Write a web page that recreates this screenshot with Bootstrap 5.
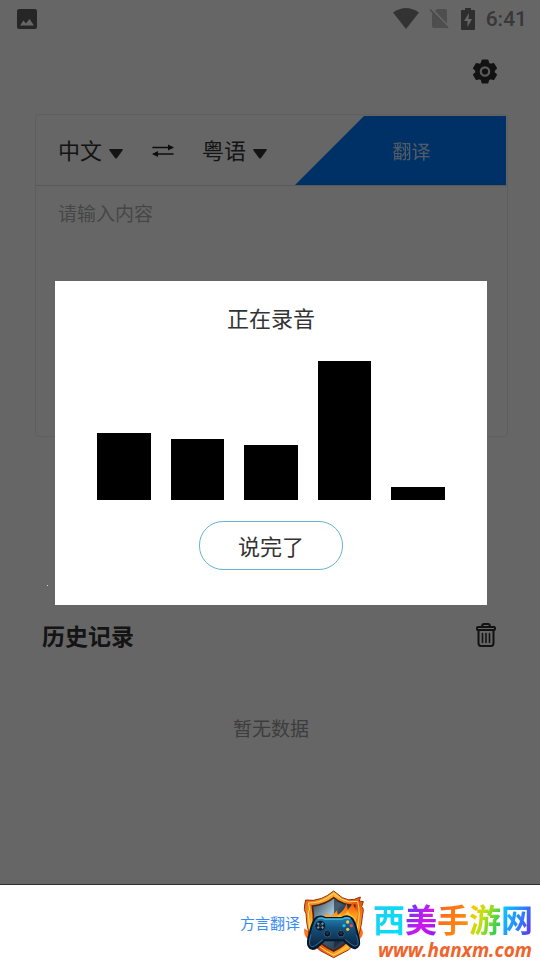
<!DOCTYPE html>
<html lang="zh-CN">
<head>
<meta charset="utf-8">
<meta name="viewport" content="width=device-width, initial-scale=1">
<title>方言翻译</title>
<link href="https://cdn.jsdelivr.net/npm/bootstrap@5.3.0/dist/css/bootstrap.min.css" rel="stylesheet">
<style>
  body { font-family: "Noto Sans CJK SC", sans-serif; color: #333; background: #fff; }
  svg { display: block; }
  button { border: 0; background: none; padding: 0; color: inherit; }
  .status-bar { height: 37px; padding: 0 13px 0 17px; color: #858585; }
  .status-icons { gap: 11px; }
  .clock { font: 500 21px/28px Roboto, sans-serif; color: #8c8c8c; }
  .top-tools { padding: 22px 43px 0 0; }
  .translator { margin: 30px 32px 0 35px; border: 1px solid #ebebeb; border-radius: 4px; }
  .translator-head { height: 71px; border-bottom: 1px solid #dcdcdc; padding: 1px 1px 0 22px; }
  .lang-select { appearance: none; border: 0; width: 68px; height: 44px; font-size: 22px; color: #333; padding: 0 0 2px;
    background: url("data:image/svg+xml,%3Csvg xmlns='http://www.w3.org/2000/svg' viewBox='0 0 14 10'%3E%3Cpath d='M1 0H13Q14.500 0 13.500 1.500L8 9Q7 10 6 9L.5 1.500Q-.5 0 1 0Z' fill='%23333'/%3E%3C/svg%3E") no-repeat right 3px top 20px / 14px 10px; }
  .swap { margin: 0 28px 0 26px; }
  .translate-btn { flex: 0 0 211px; background: #007aff; color: #fff; font-size: 19px; padding: 2px 0 0 22px;
    clip-path: polygon(69px 0, 100% 0, 100% 100%, 0 100%); }
  .translate-btn span { opacity: .8; }
  .source-text { display: block; width: 100%; height: 250px; border: 0; resize: none; outline: 0; font-size: 19px; line-height: 28px; padding: 13px 22px; background: none; }
  .source-text::placeholder { color: #b0b0b0; opacity: 1; }
  .history-head { padding: 182px 43px 0 42px; }
  .history-head h2 { font-size: 23px; line-height: 32px; font-weight: 700; margin: 0; color: #333; }
  .empty-note { font-size: 19px; line-height: 28px; margin-top: 63px; padding-left: 2px; color: #999; }
  .shade { background: rgba(0, 0, 0, .6); padding: 2px 0 0 2px; }
  .recorder { width: 80vw; background: #fff; padding: 20px 42px 35px; }
  .recorder h1 { font-size: 22px; line-height: 32px; font-weight: 400; margin: 0 0 28px; }
  .levels { height: 139px; gap: 20px; margin-bottom: 21px; }
  .level { background: #000; }
  .done-btn { width: 144px; height: 49px; border: 1px solid #65b4c8; border-radius: 24px; font-size: 22px; line-height: 32px; padding-bottom: 2px; }
  .glint { left: 47px; bottom: 298px; width: 1px; height: 1px; background: #e8dca0; }
  .foot { height: 76px; border-top: 1px solid #332b30; }
  .foot-link { font-size: 15px; line-height: 22px; color: #398df2; text-decoration: none; }
  .site-brand { right: 7px; top: 0; bottom: 0; gap: 3px; }
  .site-name { font-size: 32px; line-height: 36px; font-weight: 700; margin-top: 15px; }
  .site-name span { background-clip: text; -webkit-background-clip: text; color: transparent; }
  .g1 { background-image: linear-gradient(120deg, #22cdec, #00e0ff); }
  .g2 { background-image: linear-gradient(120deg, #5c3cff 15%, #d414ec 60%, #8618ff); }
  .g3 { background-image: linear-gradient(120deg, #ff5a38, #ff7c10 50%, #ff9a18); }
  .g4 { background-image: linear-gradient(110deg, #ffc400 15%, #bfe010 45%, #28cf58 85%); }
  .g5 { background-image: linear-gradient(110deg, #08cfff 10%, #2888ff 55%, #6430f0 90%); }
  .site-url { font: italic 700 19px/20px "Noto Sans", sans-serif; color: #f0642c; padding-left: 5px; margin-top: 4px; }
</style>
<script src="https://cdn.jsdelivr.net/npm/bootstrap@5.3.0/dist/js/bootstrap.bundle.min.js"></script>
</head>
<body class="d-flex flex-column min-vh-100">
<main class="flex-grow-1 position-relative">
  <div class="status-bar d-flex align-items-center justify-content-between">
    <svg width="20" height="20" viewBox="0 0 20 20"><path fill="#606060" fill-rule="evenodd" d="M2 0H18Q20 0 20 2V18Q20 20 18 20H2Q0 20 0 18V2Q0 0 2 0ZM3 16.500H17L12.500 10L9 14.500L6.500 11.500Z"/></svg>
    <div class="status-icons d-flex align-items-center">
      <svg width="26" height="21" viewBox="0 0 26 21"><path fill="#808080" d="M0 4.500Q13-4.500 26 4.500L13 21Z"/></svg>
      <svg width="20" height="21" viewBox="0 0 20 21"><path fill="#c4c4c4" d="M7 1H15Q17 1 17 3V19Q17 20 16 20H4Q2 20 2 18V6Z"/><path d="M0 0L20 21" stroke="#fff" stroke-width="3"/><path d="M0 1.500L18 20" stroke="#b4b4b4" stroke-width="1.500"/></svg>
      <svg width="14" height="22" viewBox="0 0 14 22"><path fill="#737373" fill-rule="evenodd" d="M4 0H10V2H13Q14 2 14 3V21Q14 22 13 22H1Q0 22 0 21V3Q0 2 1 2H4ZM8 5L3 13H6.500V19L11 11H7.500Z"/></svg>
      <span class="clock">6:41</span>
    </div>
  </div>
  <div class="top-tools d-flex justify-content-end">
    <button type="button" aria-label="设置">
      <svg width="24" height="25" viewBox="0 0 24 25"><path fill="#2f2f2f" stroke="#2f2f2f" stroke-width="2" stroke-linejoin="round" d="M9.500 1.500H14.500L15.300 4.500L17.500 5.800L20.500 5L23 9.200L20.800 11.300V13.700L23 15.800L20.500 20L17.500 19.200L15.300 20.500L14.500 23.500H9.500L8.700 20.500L6.500 19.200L3.500 20L1 15.800L3.200 13.700V11.300L1 9.200L3.500 5L6.500 5.800L8.700 4.500Z"/><circle cx="12" cy="12.500" r="4.200" fill="none" stroke="#e4e4e4" stroke-width="2.200"/></svg>
    </button>
  </div>
  <section class="translator">
    <div class="translator-head d-flex align-items-stretch justify-content-between">
      <div class="d-flex align-items-center">
        <select class="lang-select" aria-label="源语言"><option>中文</option></select>
        <button type="button" class="swap" aria-label="交换语言">
          <svg width="22" height="14" viewBox="0 0 22 14"><path d="M1 3.500H20M2 10H21" stroke="#222" stroke-width="1.600" stroke-linecap="round"/><path fill="#222" d="M16 .5L22 3.500L16 6.500ZM6 7L0 10L6 13Z"/></svg>
        </button>
        <select class="lang-select" aria-label="目标语言"><option>粤语</option></select>
      </div>
      <button type="button" class="translate-btn"><span>翻译</span></button>
    </div>
    <textarea class="source-text" aria-label="翻译内容" placeholder="请输入内容"></textarea>
  </section>
  <div class="history-head d-flex align-items-center justify-content-between">
    <h2>历史记录</h2>
    <button type="button" aria-label="清空历史记录">
      <svg width="22" height="24" viewBox="0 0 22 24" fill="none" stroke="#2d2d2d" stroke-width="2" stroke-linejoin="round"><rect x="2" y="4" width="18" height="3" rx="1"/><path d="M7 4Q7 1 9 1H13Q15 1 15 4M3.500 7V20Q3.500 23 6 23H16Q18.500 23 18.500 20V7"/><path d="M7.500 10.500V19.500M11 10.500V19.500M14.500 10.500V19.500" stroke-width="1.600" stroke-linecap="round"/></svg>
    </button>
  </div>
  <p class="empty-note text-center mb-0">暂无数据</p>

  <div class="shade position-absolute top-0 bottom-0 start-0 end-0 d-flex align-items-center justify-content-center">
    <span class="glint position-absolute"></span>
    <div class="recorder flex-shrink-0 d-flex flex-column" role="dialog" aria-labelledby="recorder-title">
      <h1 id="recorder-title" class="text-center">正在录音</h1>
      <div class="levels d-flex align-items-end">
        <div class="level flex-fill" style="height:67px"></div>
        <div class="level flex-fill" style="height:61px"></div>
        <div class="level flex-fill" style="height:55px"></div>
        <div class="level flex-fill" style="height:139px"></div>
        <div class="level flex-fill" style="height:13px"></div>
      </div>
      <button type="button" class="done-btn align-self-center">说完了</button>
    </div>
  </div>
</main>
<footer class="foot position-relative d-flex align-items-center justify-content-center">
  <a class="foot-link" href="#">方言翻译</a>
  <div class="site-brand position-absolute d-flex">
    <svg width="75" height="75" viewBox="0 0 225 225" aria-hidden="true">
      <defs>
        <linearGradient id="fire" x1="0" y1="0" x2="1" y2="1"><stop offset="0" stop-color="#d84a08"/><stop offset=".3" stop-color="#ffb42c"/><stop offset=".55" stop-color="#e65208"/><stop offset=".8" stop-color="#ffb326"/><stop offset="1" stop-color="#c63008"/></linearGradient>
        <linearGradient id="steel" x1="0" y1="0" x2="1" y2="1"><stop offset="0" stop-color="#243b51"/><stop offset=".38" stop-color="#a8c4d4"/><stop offset=".5" stop-color="#426078"/><stop offset="1" stop-color="#142436"/></linearGradient>
        <linearGradient id="flame" x1="0" y1="1" x2="0" y2="0"><stop offset="0" stop-color="#ffd23c"/><stop offset=".5" stop-color="#ff8b14"/><stop offset="1" stop-color="#ef4c08"/></linearGradient>
        <linearGradient id="pad" x1="0" y1="0" x2="0" y2="1"><stop offset="0" stop-color="#2189b8"/><stop offset=".35" stop-color="#14527e"/><stop offset="1" stop-color="#0b1c34"/></linearGradient>
      </defs>
      <path d="M28 130Q24 150 38 162L50 164L42 140ZM198 128Q210 142 197 160L182 166L190 142Z" fill="#ff7418"/>
      <path d="M116 18L142 38Q160 48 178 43L196 36L193 48L205 50L200 65Q208 70 203 88Q200 120 193 145Q182 178 160 195L116 218L76 197Q52 180 42 148Q34 115 33 86Q25 75 29 60L32 45L55 46Q82 42 98 31Z" fill="url(#fire)" stroke="#9d2d08" stroke-width="3"/>
      <path d="M116 25L140 43Q162 55 188 49L192 70Q190 75 193 84Q190 130 177 160Q161 188 116 210Q70 190 53 158Q42 130 40 82L44 72L40 54Q72 54 96 39Z" fill="none" stroke="#ffdc73" stroke-width="3"/>
      <path d="M116 38Q142 61 179 61L177 91Q178 137 162 163Q147 184 116 198Q82 183 68 160Q54 132 55 90L52 63Q91 59 116 38Z" fill="url(#steel)" stroke="#55200d" stroke-width="5"/>
      <path d="M117 43L174 66L171 140L117 190Z" fill="#15283a" opacity=".65"/>
      <path d="M80 101Q92 94 94 84L106 94Q118 88 126 76L128 89Q147 80 155 55L158 74Q169 66 173 51Q180 75 190 83L180 114H80Z" fill="url(#flame)"/>
      <path d="M112 104Q128 96 136 87L139 96Q153 88 159 77Q164 90 173 95L169 112H112Z" fill="#ffc33a"/>
      <path d="M65 97Q81 91 91 99H140Q154 89 169 99Q178 105 185 135Q196 172 191 181Q182 197 166 184L145 166H89L68 185Q51 199 42 185Q34 174 45 141Q53 107 65 97Z" fill="url(#pad)" stroke="#07172a" stroke-width="6" stroke-linejoin="round"/>
      <path d="M69 100Q83 97 89 102H142Q155 95 166 101" fill="none" stroke="#43bfe3" stroke-width="4"/>
      <path d="M48 148Q41 173 45 181Q51 190 66 178L84 164M184 149Q192 172 188 180Q181 188 169 178L151 164" fill="none" stroke="#276f9c" stroke-width="3"/>
      <circle cx="76" cy="122" r="15" fill="#0a1c31"/>
      <path d="M67 114L85 130M85 114L67 130" stroke="#7292a5" stroke-width="6"/>
      <path d="M72 118L80 126M80 118L72 126" stroke="#162a3e" stroke-width="5"/>
      <g fill="#07111f" stroke="#355d77" stroke-width="3"><circle cx="97" cy="146" r="10"/><circle cx="138" cy="146" r="10"/></g>
      <circle cx="97" cy="144" r="5" fill="#18334b"/><circle cx="138" cy="144" r="5" fill="#18334b"/>
      <circle cx="158" cy="111" r="5" fill="#ffc43b"/><circle cx="147" cy="122" r="5" fill="#20bddf"/><circle cx="169" cy="122" r="5" fill="#f2474c"/><circle cx="158" cy="133" r="5" fill="#e6c34a"/>
    </svg>
    <div class="d-flex flex-column">
      <div class="site-name text-nowrap"><span class="g1">西</span><span class="g2">美</span><span class="g3">手</span><span class="g4">游</span><span class="g5">网</span></div>
      <div class="site-url">www.hanxm.com</div>
    </div>
  </div>
</footer>
</body>
</html>
